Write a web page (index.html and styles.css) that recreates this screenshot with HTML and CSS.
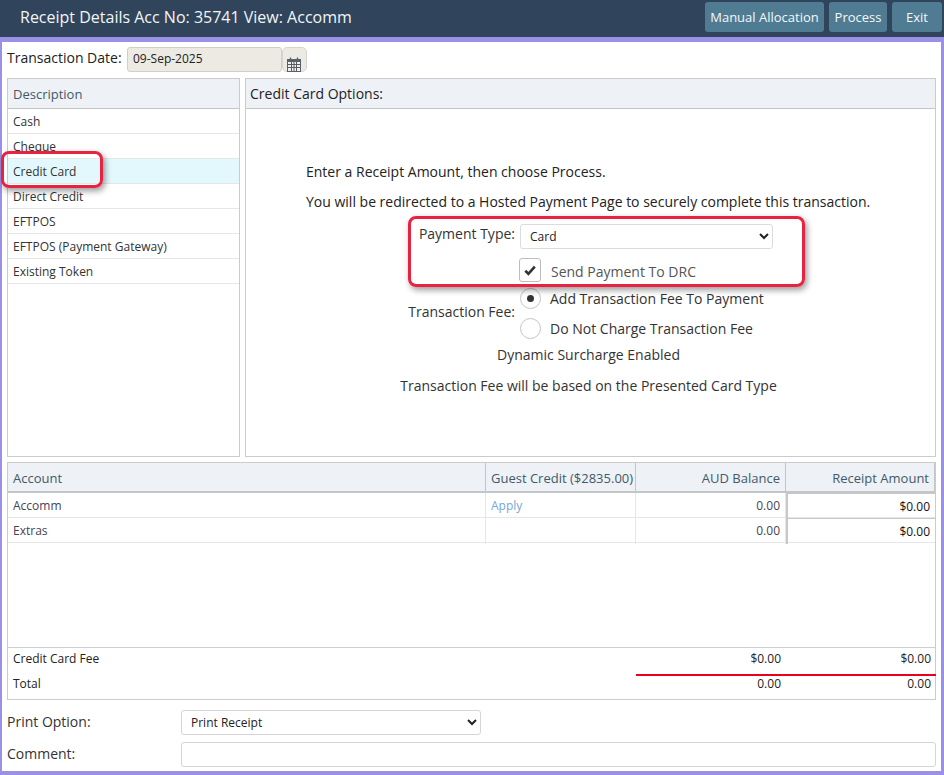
FILE: index.html
```html
<!DOCTYPE html>
<html lang="en">
<head>
  <meta charset="UTF-8">
  <meta name="viewport" content="width=device-width, initial-scale=1">
  <title>Receipt Details</title>
  <link rel="stylesheet" href="styles.css">
</head>
<body>

  <header class="topbar">
    <div class="topbar-title">Receipt Details Acc No: 35741 View: Accomm</div>
    <div class="topbar-actions">
      <button class="top-btn btn-manual">Manual Allocation</button>
      <button class="top-btn btn-process">Process</button>
      <button class="top-btn btn-exit">Exit</button>
    </div>
  </header>

  <main class="frame">
    <div class="date-row">
      <label class="date-label">Transaction Date:</label>
      <input class="date-input" type="text" value="09-Sep-2025" readonly>
      <button class="date-btn">
        <svg width="14" height="15" viewBox="0 0 14 15">
          <rect x="0.5" y="2.5" width="13" height="12" fill="#f3f1ec" stroke="#56636b"/>
          <rect x="1" y="2" width="12" height="3" fill="#56636b"/>
          <path d="M3.5 0.5v3M10.5 0.5v3" stroke="#56636b" stroke-width="1.4" fill="none"/>
          <path d="M1 7.5h12M1 10.5h12M4.5 5v9M7 5v9M9.5 5v9" stroke="#5d5a60" stroke-width="1" fill="none"/>
        </svg>
      </button>
    </div>

    <div class="top-panels">
      <div class="panel methods">
        <div class="panel-head head-blue">Description</div>
        <div class="method-row">Cash</div>
        <div class="method-row">Cheque</div>
        <div class="method-row selected">Credit Card</div>
        <div class="method-row">Direct Credit</div>
        <div class="method-row">EFTPOS</div>
        <div class="method-row">EFTPOS (Payment Gateway)</div>
        <div class="method-row">Existing Token</div>
      </div>

      <div class="panel options">
        <div class="panel-head head-dark">Credit Card Options:</div>
        <div class="options-body">
          <div class="intro">
            <p>Enter a Receipt Amount, then choose Process.</p>
            <p>You will be redirected to a Hosted Payment Page to securely complete this transaction.</p>
          </div>
          <div class="opt-grid">
            <div class="opt-label label-type">Payment Type:</div>
            <select class="type-select"><option>Card</option></select>
            <div class="check-line">
              <span class="check-box">
                <svg width="12" height="11" viewBox="0 0 12 11"><path d="M1.3 5.8 4.4 8.8 10.8 1.6" fill="none" stroke="#333" stroke-width="2.6"/></svg>
              </span>
              <span class="check-text">Send Payment To DRC</span>
            </div>
            <div class="opt-label label-fee">Transaction Fee:</div>
            <div class="radio-group">
              <div class="radio-line"><span class="radio on"></span>Add Transaction Fee To Payment</div>
              <div class="radio-line"><span class="radio"></span>Do Not Charge Transaction Fee</div>
            </div>
          </div>
          <p class="note note-first">Dynamic Surcharge Enabled</p>
          <p class="note">Transaction Fee will be based on the Presented Card Type</p>
        </div>
      </div>
    </div>

    <div class="alloc">
      <div class="alloc-row alloc-head">
        <div class="cell">Account</div>
        <div class="cell">Guest Credit ($2835.00)</div>
        <div class="cell num">AUD Balance</div>
        <div class="cell num">Receipt Amount</div>
      </div>
      <div class="alloc-row">
        <div class="cell">Accomm</div>
        <div class="cell apply">Apply</div>
        <div class="cell num">0.00</div>
        <div class="cell num amount">$0.00</div>
      </div>
      <div class="alloc-row">
        <div class="cell">Extras</div>
        <div class="cell"></div>
        <div class="cell num">0.00</div>
        <div class="cell num amount">$0.00</div>
      </div>
      <div class="alloc-spacer"></div>
      <div class="totals">
        <div class="total-row fee-row">
          <div class="total-name">Credit Card Fee</div>
          <div class="total-num">$0.00</div>
          <div class="total-num">$0.00</div>
        </div>
        <div class="total-row sum-row">
          <div class="total-name">Total</div>
          <div class="total-num">0.00</div>
          <div class="total-num">0.00</div>
        </div>
      </div>
    </div>

    <div class="form-row print-row">
      <label class="form-label">Print Option:</label>
      <select class="print-select"><option>Print Receipt</option></select>
    </div>
    <div class="form-row comment-row">
      <label class="form-label">Comment:</label>
      <input class="comment-input" type="text">
    </div>
  </main>

  <!-- red callouts drawn over the screenshot -->
  <div class="callout callout-card"></div>
  <div class="callout callout-type"></div>

</body>
</html>
```

FILE: styles.css
```css
* {
  box-sizing: border-box;
}

html, body {
  margin: 0;
  height: 775px;
  overflow: hidden;
}

body {
  position: relative;
  font-family: "Open Sans", sans-serif;
  font-size: 14px;
  color: #222;
  background: #fff;
}

p {
  margin: 0;
}

/* Top bar */
.topbar {
  height: 37px;
  background: #30455b;
  display: flex;
  justify-content: space-between;
  padding: 2px 2px 0 20px;
}

.topbar-title {
  color: #f2f5f7;
  font-size: 16px;
  line-height: 31px;
}

.topbar-actions {
  display: flex;
  gap: 5px;
  height: 30px;
}

.top-btn {
  background: #4f7c93;
  color: #f4f8fa;
  border: none;
  border-radius: 3px;
  font-family: inherit;
  font-size: 13px;
  padding: 0;
}

.btn-manual { width: 119px; }
.btn-process { width: 58px; }
.btn-exit { width: 50px; }

/* Frame */
.frame {
  height: 738px;
  border: solid #9b90e8;
  border-width: 5px 3px 4px 2px;
  padding: 5px 5px 0 5px;
}

.date-row {
  display: flex;
  align-items: center;
  height: 25px;
}

.date-label {
  width: 120px;
  color: #222;
  line-height: 22px;
  margin-bottom: 3px;
}

.date-input {
  width: 155px;
  height: 25px;
  background: #eceae3;
  border: 1px solid #cfcfcb;
  border-radius: 3px;
  font-family: inherit;
  font-size: 12px;
  color: #222;
  padding: 0 5px 2px;
}

.date-btn {
  width: 25px;
  height: 25px;
  background: #eceae3;
  border: 1px solid #d5d5d0;
  border-radius: 5px;
  padding: 9px 2px 0 0;
  display: flex;
  justify-content: center;
}

.top-panels {
  display: flex;
  gap: 5px;
  margin-top: 6px;
  height: 379px;
}

.panel {
  border: 1px solid #c9ccce;
}

.methods {
  width: 233px;
}

.options {
  width: 691px;
}

.panel-head {
  height: 30px;
  background: #eef1f5;
  border-bottom: 1px solid #c3c6c9;
  padding-left: 5px;
  line-height: 30px;
}

.head-blue {
  font-size: 13px;
  color: #3f5a6b;
}

.head-dark {
  font-size: 14px;
  color: #222;
  padding-left: 4px;
}

.method-row {
  height: 25px;
  line-height: 26px;
  padding-left: 5px;
  font-size: 12px;
  color: #333;
  border-bottom: 1px solid #e6e6e6;
}

.method-row.selected {
  background: #e2f8fd;
}

.options-body {
  padding-top: 53px;
}

.intro {
  margin-left: 60px;
}

.intro p {
  line-height: 20px;
  margin-bottom: 10px;
  color: #222;
}

.opt-grid {
  display: grid;
  grid-template-columns: 269px 1fr;
  column-gap: 5px;
  margin-top: 12px;
}

.opt-label {
  text-align: right;
  color: #333;
}

.label-type {
  line-height: 20px;
}

.type-select {
  width: 253px;
  height: 25px;
  background: #fff;
  border: 1px solid #dcdcdc;
  border-radius: 3px;
  font-family: inherit;
  font-size: 12px;
  color: #222;
  padding-left: 5px;
}

.check-line {
  grid-column: 2;
  display: flex;
  align-items: center;
  margin-top: 9px;
  margin-left: -1px;
  height: 24px;
}

.check-box {
  width: 22px;
  height: 24px;
  border: 1px solid #bdbdbd;
  border-radius: 3px;
  display: flex;
  align-items: center;
  justify-content: center;
}

.check-text {
  margin-left: 10px;
  padding-top: 2px;
  color: #555;
}

.label-fee {
  align-self: center;
  margin-bottom: 3px;
}

.radio-group {
  margin-top: 1px;
}

.radio-line {
  display: flex;
  align-items: center;
  height: 30px;
  color: #333;
}

.radio {
  width: 21px;
  height: 21px;
  border: 1px solid #c4c4c4;
  border-radius: 50%;
  margin-right: 9px;
  position: relative;
}

.radio.on::after {
  content: "";
  position: absolute;
  top: 6px;
  left: 6px;
  width: 7px;
  height: 7px;
  border-radius: 50%;
  background: #333;
}

.note {
  text-align: center;
  width: 685px;
  line-height: 20px;
  color: #333;
  margin-top: 11px;
}

.note-first {
  margin-top: 2px;
}

/* Allocation table */
.alloc {
  margin-top: 5px;
  height: 238px;
  border: 1px solid #c9ccce;
  display: flex;
  flex-direction: column;
}

.alloc-row {
  display: grid;
  grid-template-columns: 478px 150px 150px 1fr;
  height: 25px;
  font-size: 12px;
  color: #445;
  border-bottom: 1px solid #e6e6e6;
}

.alloc-row .cell {
  padding: 0 5px;
  line-height: 26px;
  border-right: 1px solid #e6e6e6;
  white-space: nowrap;
}

.alloc-row .cell:last-child {
  border-right: none;
}

.alloc-head {
  height: 30px;
  background: #eef1f5;
  border-bottom: 2px solid #c3c6c9;
  color: #3f5a6b;
}

.alloc-row.alloc-head .cell {
  line-height: 31px;
  border-right: 1px solid #c3c6c9;
  font-size: 13px;
}

.num {
  text-align: right;
}

.apply {
  color: #76a6d6;
}

.amount {
  color: #111;
  border-top: 1px solid #c8c8c8;
  border-left: 2px solid #c8c8c8;
  line-height: 25px !important;
}

.alloc-spacer {
  flex: 1;
}

.totals {
  height: 52px;
  border-top: 1px solid #cfcfcf;
}

.total-row {
  display: grid;
  grid-template-columns: 628px 146px 1fr;
  font-size: 12px;
  color: #222;
  padding-right: 4px;
}

.fee-row {
  height: 28px;
  line-height: 22px;
}

.sum-row {
  height: 24px;
  line-height: 15px;
}

.total-name {
  padding-left: 5px;
}

.total-num {
  text-align: right;
}

.total-num:nth-child(2) {
  padding-right: 1px;
}

.fee-row .total-num {
  border-bottom: 2px solid #e8001c;
}

.fee-row .total-num:last-child {
  margin-right: -5px;
  padding-right: 5px;
}

/* Bottom form */
.form-row {
  display: flex;
  align-items: center;
  height: 25px;
}

.print-row {
  margin-top: 10px;
}

.comment-row {
  margin-top: 7px;
}

.form-label {
  width: 174px;
  color: #333;
  padding-bottom: 2px;
}

.print-select {
  width: 300px;
  height: 25px;
  background: #fff;
  border: 1px solid #d5d5d5;
  border-radius: 3px;
  font-family: inherit;
  font-size: 12px;
  color: #222;
  padding-left: 5px;
}

.comment-input {
  width: 755px;
  height: 25px;
  border: 1px solid #d5d5d5;
  border-radius: 3px;
}

/* Red callouts */
.callout {
  position: absolute;
  border: 3px solid #e8233f;
  border-radius: 8px;
  box-shadow: 2px 3px 6px rgba(0, 0, 0, 0.4);
}

.callout-card {
  left: 1px;
  top: 151px;
  width: 102px;
  height: 37px;
}

.callout-type {
  left: 408px;
  top: 216px;
  width: 397px;
  height: 71px;
}
```
